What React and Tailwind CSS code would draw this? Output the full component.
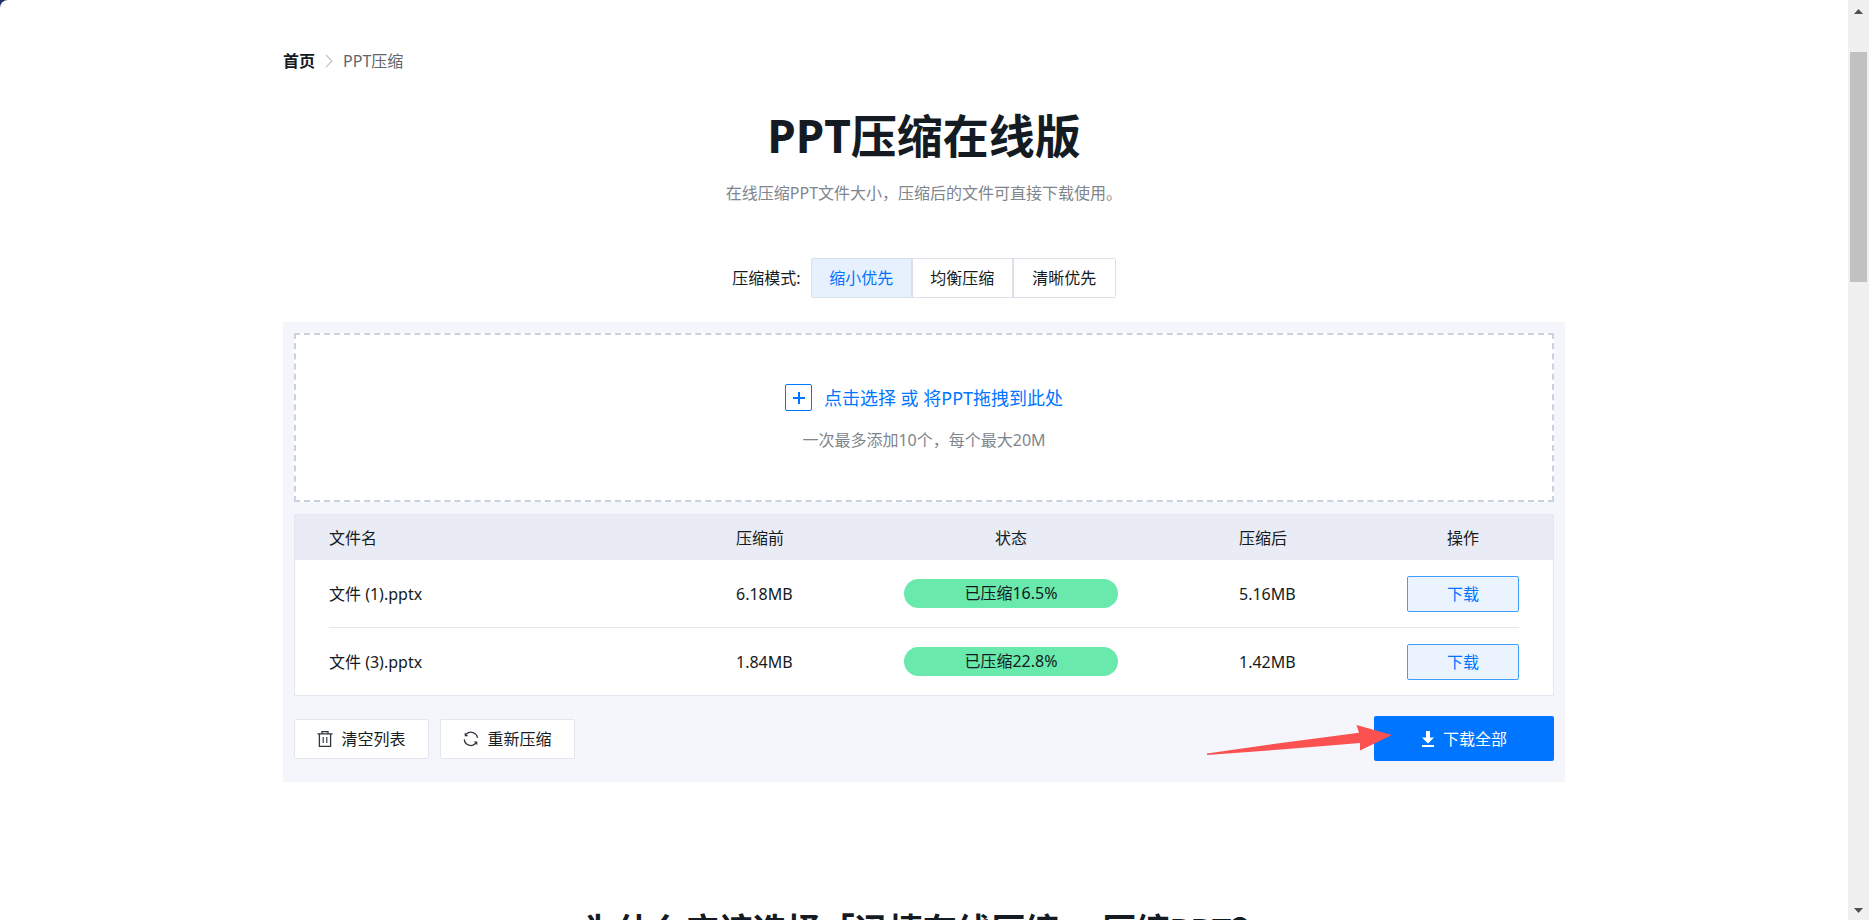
// The page scrolls inside its own pane, with a classic scrollbar at the
// right edge.

import { useState } from "react";

const MODES = [
  { key: "size", label: "缩小优先" },
  { key: "balanced", label: "均衡压缩" },
  { key: "clarity", label: "清晰优先" },
];

const FILES = [
  { name: "文件 (1).pptx", before: "6.18MB", status: "已压缩16.5%", after: "5.16MB" },
  { name: "文件 (3).pptx", before: "1.84MB", status: "已压缩22.8%", after: "1.42MB" },
];

function ChevronIcon() {
  return (
    <svg width="8" height="14" viewBox="0 0 8 14" fill="none" stroke="#c0c4cc" strokeWidth="1.2" aria-hidden="true">
      <path d="M1 1l6 6-6 6" />
    </svg>
  );
}

function PlusIcon() {
  return (
    <svg width="27" height="27" viewBox="0 0 27 27" fill="none" stroke="#0075ff" aria-hidden="true">
      <rect x="0.5" y="0.5" width="26" height="26" rx="1.5" />
      <path d="M8 14h12M14 8v12" strokeWidth="2" />
    </svg>
  );
}

function TrashIcon() {
  return (
    <svg width="16" height="16" viewBox="0 0 16 16" fill="none" stroke="#30363d" strokeWidth="1.3" aria-hidden="true">
      <path d="M0.5 2.8h15M5 2.5V0.7h6v1.8M2.4 3v12.3h11.2V3" />
      <path d="M6.2 6v6M9.8 6v6" strokeWidth="1.1" />
    </svg>
  );
}

function RefreshIcon() {
  return (
    <svg width="16" height="16" viewBox="0 0 16 16" fill="none" stroke="#30363d" strokeWidth="1.3" aria-hidden="true">
      <path d="M3.2 3.3A6.6 6.6 0 0 1 14.5 6.9M1.3 8.4A6.6 6.6 0 0 0 12.8 12.3" />
      <path d="M1.7 1.6v3.6h3.6zM14.3 14.2v-3.6h-3.6z" fill="#30363d" stroke="none" />
    </svg>
  );
}

function DownloadIcon() {
  return (
    <svg width="14" height="16" viewBox="0 0 14 16" fill="#fff" aria-hidden="true">
      <path d="M5 0h4v6.5h4L7 12.4 1 6.5h4zM1 14h12v2H1z" />
    </svg>
  );
}

// Red pointer that ends on the download-all button.
function PointerArrow() {
  return (
    <svg
      width="187"
      height="32"
      viewBox="0 0 187 32"
      fill="#fb5150"
      className="pointer-events-none absolute top-2 -left-42"
      aria-hidden="true"
    >
      <path d="M1 29.5L75 18.900 153 8.800 150.500 1 186 11 154 26.500V19L75 25.500 1 31z" />
    </svg>
  );
}

function ScrollRail() {
  return (
    <div className="flex w-[21px] shrink-0 flex-col items-center bg-[#f0f0f0]" aria-hidden="true">
      <svg width="21" height="52" viewBox="0 0 21 52" fill="#505050">
        <path d="M6 14l4.500-5 4.500 5z" />
      </svg>
      <div className="h-1/4 w-[17px] bg-[#c1c1c1]" />
      <svg width="21" height="20" viewBox="0 0 21 20" fill="#505050" className="mt-auto">
        <path d="M6 8l4.500 5 4.500-5z" />
      </svg>
    </div>
  );
}

function ModePicker({ mode, onChange }) {
  return (
    <div className="mt-[53px] flex items-center justify-center gap-[10px]">
      <span id="mode-label">压缩模式:</span>
      <div
        role="group"
        aria-labelledby="mode-label"
        className="flex divide-x-2 divide-[#dcdfe8] overflow-hidden rounded-xs border border-[#dcdfe8]"
      >
        {MODES.map((m) => (
          <button
            key={m.key}
            type="button"
            aria-pressed={mode === m.key}
            onClick={() => onChange(m.key)}
            className={
              mode === m.key
                ? "h-[38px] w-[101px] bg-[#e7f1fd] text-[#0075ff]"
                : "h-[38px] w-[101px] bg-white"
            }
          >
            {m.label}
          </button>
        ))}
      </div>
    </div>
  );
}

function FileTable() {
  return (
    <div className="mt-3 overflow-hidden border border-[#e3e6ee] bg-white px-[34px]">
      <table className="w-full table-fixed border-separate border-spacing-0 text-left">
        <thead>
          <tr className="h-[45px] bg-[#e9ecf4] shadow-[-34px_0_0_#e9ecf4,34px_0_0_#e9ecf4]">
            <th className="p-0 font-normal">文件名</th>
            <th className="w-[168px] p-0 font-normal">压缩前</th>
            <th className="w-[335px] p-0 pr-[121px] text-center font-normal">状态</th>
            <th className="w-[168px] p-0 font-normal">压缩后</th>
            <th className="w-28 p-0 text-center font-normal">操作</th>
          </tr>
        </thead>
        <tbody className="[&>tr:not(:last-child)>td]:border-b [&>tr:not(:last-child)>td]:border-[#e5e7eb]">
          {FILES.map((f) => (
            <tr key={f.name} className="h-17 last:h-[67px]">
              <td className="p-0">{f.name}</td>
              <td className="p-0">{f.before}</td>
              <td className="p-0 pr-[121px]">
                <div className="h-[29px] rounded-full bg-[#69e9ac] text-center leading-[29px]">
                  {f.status}
                </div>
              </td>
              <td className="p-0">{f.after}</td>
              <td className="p-0">
                <button
                  type="button"
                  className="block h-9 w-full rounded-xs border border-[#409eff] bg-[#ebf3ff] text-[#0075ff]"
                >
                  下载
                </button>
              </td>
            </tr>
          ))}
        </tbody>
      </table>
    </div>
  );
}

export default function App() {
  const [mode, setMode] = useState("size");

  return (
    <div className="flex h-screen bg-[#1f2d66] font-['Noto_Sans','Noto_Sans_CJK_SC',sans-serif] text-base leading-6 text-[#141b22]">
      <main className="min-w-0 flex-1 overflow-x-hidden overflow-y-auto rounded-tl-lg bg-white">
        <div className="mx-auto max-w-[1282px] pt-[49px]">
          <nav className="flex items-center gap-[10px]">
            <a href="#" className="font-bold">首页</a>
            <ChevronIcon />
            <span className="text-[#5f666e]">PPT压缩</span>
          </nav>

          <h1 className="mt-[29px] text-center text-[46px] leading-[66px] font-bold">PPT压缩在线版</h1>
          <p className="mt-[13px] text-center text-[#7f868e]">
            在线压缩PPT文件大小，压缩后的文件可直接下载使用。
          </p>

          <ModePicker mode={mode} onChange={setMode} />

          <section className="mt-6 bg-[#f5f6fb] p-[11px] pb-[21px]">
            <button
              type="button"
              className="flex h-[169px] w-full flex-col items-center justify-center gap-4 border-2 border-dashed border-[#c8d2e1] bg-white"
            >
              <span className="flex items-center gap-3 text-lg text-[#0075ff]">
                <PlusIcon />
                点击选择 或 将PPT拖拽到此处
              </span>
              <span className="text-[#7f868e]">一次最多添加10个，每个最大20M</span>
            </button>

            <FileTable />

            <div className="mt-5 flex items-center gap-[11px]">
              <button
                type="button"
                className="flex h-10 w-[135px] items-center justify-center gap-2 rounded-xs border border-[#e3e6ee] bg-white"
              >
                <TrashIcon />
                清空列表
              </button>
              <button
                type="button"
                className="flex h-10 w-[135px] items-center justify-center gap-2 rounded-xs border border-[#e3e6ee] bg-white"
              >
                <RefreshIcon />
                重新压缩
              </button>
              <div className="relative ml-auto">
                <button
                  type="button"
                  className="flex h-[45px] w-45 items-center justify-center gap-2 rounded-xs bg-[#0075ff] text-white"
                >
                  <DownloadIcon />
                  下载全部
                </button>
                <PointerArrow />
              </div>
            </div>
          </section>

          <h2 className="mt-31 text-center text-[34px] leading-12 font-bold">
            为什么应该选择「迅捷在线压缩」 压缩PPT？
          </h2>
        </div>
      </main>
      <ScrollRail />
    </div>
  );
}
